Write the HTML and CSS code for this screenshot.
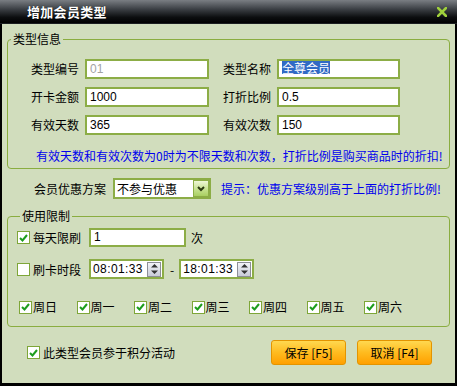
FILE: index.html
```html
<!DOCTYPE html>
<html lang="zh-CN">
<head>
  <meta charset="UTF-8" />
  <title>增加会员类型</title>
  <link rel="stylesheet" href="styles.css">
</head>
<body>
  <div class="window">
    <div class="titlebar">
      <span class="title">增加会员类型</span>
      <svg class="close" width="10" height="10" viewBox="0 0 10 10">
        <path d="M1 1 L9 9 M9 1 L1 9" stroke="#9fd03c" stroke-width="2.6" stroke-linecap="square"/>
      </svg>
    </div>

    <div class="content">
      <fieldset class="group group-info">
        <legend>类型信息</legend>
        <div class="info-grid">
          <span class="label">类型编号</span>
          <div class="field field-left disabled">01</div>
          <span class="label">类型名称</span>
          <div class="field field-right"><span class="selected">全尊会员</span></div>

          <span class="label">开卡金额</span>
          <div class="field field-left">1000</div>
          <span class="label">打折比例</span>
          <div class="field field-right">0.5</div>

          <span class="label">有效天数</span>
          <div class="field field-left">365</div>
          <span class="label">有效次数</span>
          <div class="field field-right">150</div>
        </div>
        <p class="note">有效天数和有效次数为0时为不限天数和次数，打折比例是购买商品时的折扣!</p>
      </fieldset>

      <div class="discount-row">
        <span class="label">会员优惠方案</span>
        <div class="select">
          <span class="select-text">不参与优惠</span>
          <span class="select-btn">
            <svg width="8" height="6" viewBox="0 0 8 6"><path d="M1 1 L4 4 L7 1" fill="none" stroke="#2b3a12" stroke-width="2"/></svg>
          </span>
        </div>
        <span class="hint">提示：优惠方案级别高于上面的打折比例!</span>
      </div>

      <fieldset class="group group-limit">
        <legend>使用限制</legend>
        <div class="limit-row">
          <span class="check on"><svg width="9" height="8" viewBox="0 0 9 8"><path d="M1 4 L3.5 6.5 L8 1" fill="none" stroke="#1d9d1d" stroke-width="2"/></svg></span>
          <span class="check-label">每天限刷</span>
          <div class="field field-count">1</div>
          <span class="unit">次</span>
        </div>
        <div class="limit-row row-time">
          <span class="check"></span>
          <span class="check-label">刷卡时段</span>
          <div class="field field-time">
            <span class="time-text">08:01:33</span>
            <span class="spin"><svg width="9" height="12" viewBox="0 0 9 12"><path d="M4.5 1 L8 4.5 H1 Z M1 7.5 H8 L4.5 11 Z" fill="#333"/></svg></span>
          </div>
          <span class="dash">-</span>
          <div class="field field-time">
            <span class="time-text">18:01:33</span>
            <span class="spin"><svg width="9" height="12" viewBox="0 0 9 12"><path d="M4.5 1 L8 4.5 H1 Z M1 7.5 H8 L4.5 11 Z" fill="#333"/></svg></span>
          </div>
        </div>
        <div class="weekdays">
          <label class="day"><span class="check on"><svg width="9" height="8" viewBox="0 0 9 8"><path d="M1 4 L3.5 6.5 L8 1" fill="none" stroke="#1d9d1d" stroke-width="2"/></svg></span>周日</label>
          <label class="day"><span class="check on"><svg width="9" height="8" viewBox="0 0 9 8"><path d="M1 4 L3.5 6.5 L8 1" fill="none" stroke="#1d9d1d" stroke-width="2"/></svg></span>周一</label>
          <label class="day"><span class="check on"><svg width="9" height="8" viewBox="0 0 9 8"><path d="M1 4 L3.5 6.5 L8 1" fill="none" stroke="#1d9d1d" stroke-width="2"/></svg></span>周二</label>
          <label class="day"><span class="check on"><svg width="9" height="8" viewBox="0 0 9 8"><path d="M1 4 L3.5 6.5 L8 1" fill="none" stroke="#1d9d1d" stroke-width="2"/></svg></span>周三</label>
          <label class="day"><span class="check on"><svg width="9" height="8" viewBox="0 0 9 8"><path d="M1 4 L3.5 6.5 L8 1" fill="none" stroke="#1d9d1d" stroke-width="2"/></svg></span>周四</label>
          <label class="day"><span class="check on"><svg width="9" height="8" viewBox="0 0 9 8"><path d="M1 4 L3.5 6.5 L8 1" fill="none" stroke="#1d9d1d" stroke-width="2"/></svg></span>周五</label>
          <label class="day"><span class="check on"><svg width="9" height="8" viewBox="0 0 9 8"><path d="M1 4 L3.5 6.5 L8 1" fill="none" stroke="#1d9d1d" stroke-width="2"/></svg></span>周六</label>
        </div>
      </fieldset>

      <div class="footer">
        <span class="check on"><svg width="9" height="8" viewBox="0 0 9 8"><path d="M1 4 L3.5 6.5 L8 1" fill="none" stroke="#1d9d1d" stroke-width="2"/></svg></span>
        <span class="check-label">此类型会员参于积分活动</span>
        <div class="buttons">
          <button class="btn">保存 [F5]</button>
          <button class="btn">取消 [F4]</button>
        </div>
      </div>
    </div>
  </div>
</body>
</html>
```

FILE: styles.css
```css
body {
  margin: 0;
  background: #000;
  font-family: "Noto Sans CJK SC", "Noto Sans", sans-serif;
  font-size: 12px;
  color: #000;
}
.window {
  width: 457px;
  height: 386px;
  display: flex;
  flex-direction: column;
}
.titlebar {
  height: 24px;
  flex: none;
  box-sizing: border-box;
  display: flex;
  align-items: center;
  justify-content: space-between;
  padding: 0 10px 0 27px;
  background: linear-gradient(#7a7e83, #3b3f44 40%, #0c0e10 75%, #000);
  border-bottom: 1px solid #1a1d20;
}
.title {
  color: #fff;
  font-weight: bold;
  font-size: 13px;
  letter-spacing: 0.3px;
  text-shadow: 0 0 1px #000;
}
.close {
  display: block;
}
.content {
  flex: 1;
  margin: 0 2px 3px 2px;
  padding-top: 8px;
  background: #d1ddbd;
}
.group {
  margin: 0 5px 0 5px;
  border: 1px solid #8aad40;
  border-radius: 4px;
  padding: 13px 0 5px 0;
}
.group legend {
  margin-left: 3px;
  padding: 0 2px;
  line-height: 14px;
  font-size: 12px;
}
.info-grid {
  display: grid;
  grid-template-columns: 54px 138px 54px 123px;
  grid-auto-rows: 20px;
  row-gap: 8px;
  padding-left: 23px;
  align-items: center;
}
.label {
  line-height: 14px;
}
.field {
  box-sizing: border-box;
  height: 20px;
  border: 2px solid #8cad46;
  background: #fff;
  font-family: "Liberation Sans", Arial, sans-serif;
  font-size: 12px;
  line-height: 16px;
  padding-left: 3px;
}
.field-left {
  width: 124px;
}
.field-right {
  width: 123px;
}
.disabled {
  color: #a3a3a3;
}
.selected {
  background: #316ac5;
  color: #fff;
  font-family: "Noto Sans CJK SC", sans-serif;
  line-height: 13px;
  display: inline-block;
}
.note {
  margin: 14px 0 0 28px;
  color: #0000ee;
  line-height: 14px;
  white-space: nowrap;
}
.discount-row {
  margin-top: 9px;
  padding-left: 32px;
  display: flex;
  align-items: center;
  height: 21px;
}
.select {
  box-sizing: border-box;
  width: 98px;
  height: 21px;
  margin-left: 7px;
  border: 2px solid #8cad46;
  background: #fff;
  display: flex;
  align-items: center;
  justify-content: space-between;
  padding-left: 2px;
}
.select-btn {
  box-sizing: border-box;
  width: 16px;
  height: 17px;
  border: 1px solid #8cad46;
  background: linear-gradient(#eef7d6, #c3df8a 60%, #a9cf62);
  display: flex;
  align-items: center;
  justify-content: center;
}
.hint {
  margin-left: 10px;
  color: #0000ee;
  white-space: nowrap;
}
.group-limit {
  margin-top: 10px;
  padding: 5px 0 12px 9px;
}
.limit-row {
  display: flex;
  align-items: center;
  height: 19px;
}
.row-time {
  margin-top: 12px;
  height: 20px;
}
.check {
  box-sizing: border-box;
  width: 13px;
  height: 13px;
  flex: none;
  border: 1px solid #7ea638;
  background: #fff;
  display: inline-flex;
  align-items: center;
  justify-content: center;
}
.check-label {
  margin-left: 3px;
}
.field-count {
  width: 97px;
  height: 19px;
  margin-left: 8px;
  line-height: 15px;
}
.unit {
  margin-left: 5px;
}
.field-time {
  width: 75px;
  margin-left: 8px;
  display: flex;
  align-items: center;
  justify-content: space-between;
  padding: 0 1px 0 2px;
  letter-spacing: 0.4px;
}
.dash + .field-time {
  margin-left: 0;
}
.spin {
  box-sizing: border-box;
  width: 14px;
  height: 15px;
  border: 1px solid #8d8f96;
  background: linear-gradient(#f2f3f8, #c9ccd8);
  display: flex;
  align-items: center;
  justify-content: center;
}
.dash {
  margin: 0 5px 0 6px;
}
.weekdays {
  margin-top: 21px;
  padding-left: 2px;
  display: flex;
}
.day {
  width: 57.5px;
  display: flex;
  align-items: center;
  gap: 1px;
  line-height: 14px;
}
.footer {
  margin-top: 13px;
  padding: 0 23px 0 25px;
  display: flex;
  align-items: center;
  height: 25px;
}
.buttons {
  margin-left: auto;
  display: flex;
  gap: 11px;
}
.btn {
  box-sizing: border-box;
  width: 75px;
  height: 25px;
  padding: 0;
  border: 1px solid #e39400;
  border-radius: 3px;
  background: linear-gradient(#ffd850, #ffbb1f 50%, #ffa000);
  font-family: "Noto Sans CJK SC", sans-serif;
  font-size: 12px;
  color: #000;
}
```
